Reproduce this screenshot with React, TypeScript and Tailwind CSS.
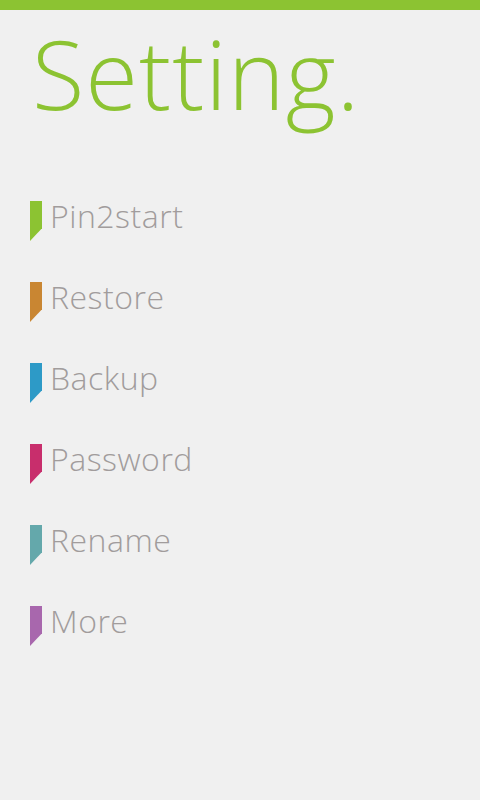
const items = [
  { label: "Pin2start", color: "bg-[#8cc332]" },
  { label: "Restore", color: "bg-[#c98632]" },
  { label: "Backup", color: "bg-[#2d9ac7]" },
  { label: "Password", color: "bg-[#c82e6c]" },
  { label: "Rename", color: "bg-[#64a8ab]" },
  { label: "More", color: "bg-[#a867ad]" },
];

function Marker({ color }: { color: string }) {
  return (
    <div
      className={`w-[12px] h-[40px] shrink-0 ${color} [clip-path:polygon(0_0,100%_0,100%_68%,0_100%)]`}
    />
  );
}

export default function App() {
  return (
    <div className="w-[480px] h-[800px] bg-[#f0f0f0] font-['Open_Sans',sans-serif] overflow-hidden">
      <div className="h-[10px] bg-[#8cc332]" />
      <h1 className="pl-[32px] pt-[7px] text-[96px] leading-[112px] font-light text-[#8cc332] tracking-[1px]">
        Setting.
      </h1>
      <ul className="mt-[72px] pl-[30px] flex flex-col gap-[41px]">
        {items.map((it) => (
          <li key={it.label} className="flex items-start gap-[8px] h-[40px]">
            <Marker color={it.color} />
            <span className="text-[32px] leading-[34px] font-light text-[#a19c9c] -mt-[2px] tracking-[0.5px]">
              {it.label}
            </span>
          </li>
        ))}
      </ul>
    </div>
  );
}
